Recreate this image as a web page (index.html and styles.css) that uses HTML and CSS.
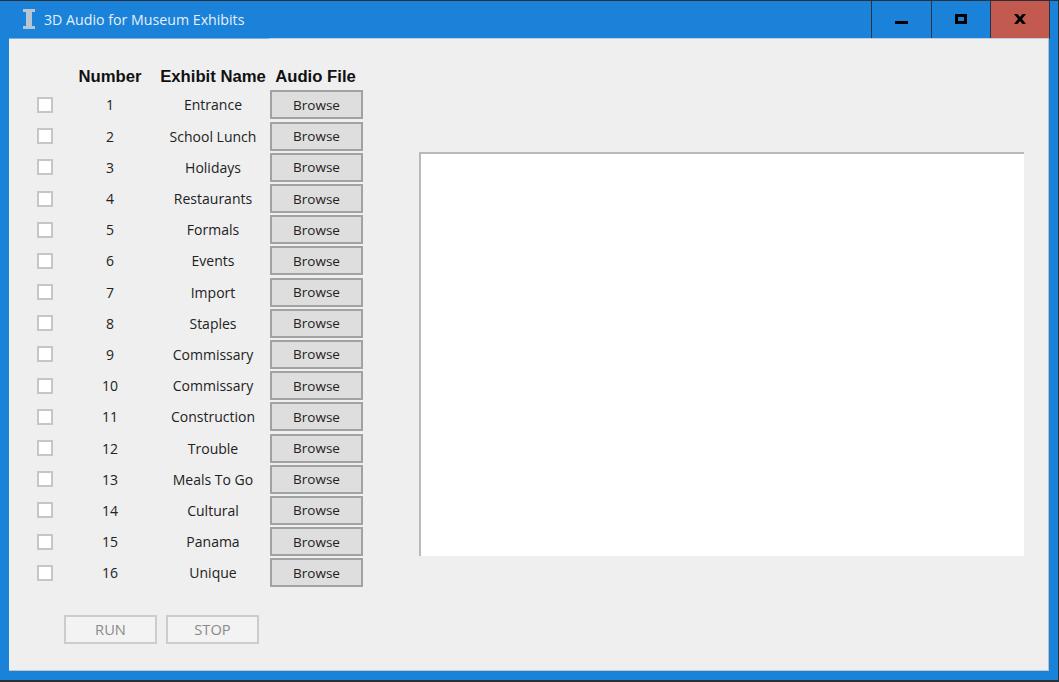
FILE: index.html

```html
<!DOCTYPE html>
<html>
<head>
  <meta charset="UTF-8">
  <title>3D Audio for Museum Exhibits</title>
  <link rel="stylesheet" href="styles.css">
</head>
<body>

<div class="window">
  <div class="titlebar">
    <svg class="app-icon" width="14" height="20" viewBox="0 0 14 20">
      <path d="M1 0h12v3H10v14h3v3H1v-3h3V3H1z" fill="#b5c5d2"/>
    </svg>
    <span class="title">3D Audio for Museum Exhibits</span>
    <div class="caption-btns">
      <div class="caption-btn min">
        <svg width="13" height="3" viewBox="0 0 13 3"><rect width="13" height="3" fill="#000"/></svg>
      </div>
      <div class="caption-btn max">
        <svg width="12" height="10" viewBox="0 0 12 10"><path d="M0 0h12v10H0zM3 3v4h6V3z" fill="#000" fill-rule="evenodd"/></svg>
      </div>
      <div class="caption-btn close">
        <svg width="12" height="10" viewBox="0 0 12 10"><path d="M0 0h3.500L6 3l2.500-3H12L8 5l4 5H8.500L6 7l-2.500 3H0l4-5z" fill="#000"/></svg>
      </div>
    </div>
  </div>
  <div class="client-edge"></div>

  <div class="client">
    <div class="left">
      <div class="row head">
        <span></span>
        <span>Number</span>
        <span>Exhibit Name</span>
        <span class="audio-head">Audio File</span>
      </div>
      <div class="row"><span class="check"></span><span>1</span><span>Entrance</span><button class="browse">Browse</button></div>
      <div class="row"><span class="check"></span><span>2</span><span>School Lunch</span><button class="browse">Browse</button></div>
      <div class="row"><span class="check"></span><span>3</span><span>Holidays</span><button class="browse">Browse</button></div>
      <div class="row"><span class="check"></span><span>4</span><span>Restaurants</span><button class="browse">Browse</button></div>
      <div class="row"><span class="check"></span><span>5</span><span>Formals</span><button class="browse">Browse</button></div>
      <div class="row"><span class="check"></span><span>6</span><span>Events</span><button class="browse">Browse</button></div>
      <div class="row"><span class="check"></span><span>7</span><span>Import</span><button class="browse">Browse</button></div>
      <div class="row"><span class="check"></span><span>8</span><span>Staples</span><button class="browse">Browse</button></div>
      <div class="row"><span class="check"></span><span>9</span><span>Commissary</span><button class="browse">Browse</button></div>
      <div class="row"><span class="check"></span><span>10</span><span>Commissary</span><button class="browse">Browse</button></div>
      <div class="row"><span class="check"></span><span>11</span><span>Construction</span><button class="browse">Browse</button></div>
      <div class="row"><span class="check"></span><span>12</span><span>Trouble</span><button class="browse">Browse</button></div>
      <div class="row"><span class="check"></span><span>13</span><span>Meals To Go</span><button class="browse">Browse</button></div>
      <div class="row"><span class="check"></span><span>14</span><span>Cultural</span><button class="browse">Browse</button></div>
      <div class="row"><span class="check"></span><span>15</span><span>Panama</span><button class="browse">Browse</button></div>
      <div class="row"><span class="check"></span><span>16</span><span>Unique</span><button class="browse">Browse</button></div>
      <div class="actions">
        <button class="action">RUN</button>
        <button class="action">STOP</button>
      </div>
    </div>
    <div class="output"></div>
  </div>
</div>

</body>
</html>
```

FILE: styles.css

```css
html, body {
  margin: 0;
  padding: 0;
  height: 100%;
  overflow: hidden;
  background-color: #2b2f36;
}
.window {
  box-sizing: border-box;
  display: flex;
  flex-direction: column;
  width: 1058px;
  height: 679px;
  margin-top: 1px;
  background-color: #1a82d9;
  font-family: "Open Sans", "Noto Sans", sans-serif;
  font-size: 14px;
  color: #222;
}
.titlebar {
  display: flex;
  align-items: center;
  flex: none;
  height: 37px;
  padding-left: 22px;
}
.app-icon {
  flex: none;
  margin-top: -1px;
}
.title {
  margin-left: 8px;
  color: #e6f0fa;
  font-size: 14.2px;
}
.caption-btns {
  display: flex;
  align-self: flex-start;
  margin-left: auto;
  margin-right: 8px;
  height: 38px;
}
.caption-btn {
  box-sizing: border-box;
  display: flex;
  align-items: center;
  justify-content: center;
  width: 60px;
  height: 38px;
  border-left: 1px solid #2a3440;
  border-bottom: 1px solid #2a3440;
}
.caption-btn svg {
  margin-top: -2px;
}
.caption-btn.min svg {
  margin-top: 6px;
}
.caption-btn.max {
  width: 59px;
}
.caption-btn.close {
  background-color: #c25a50;
  border-right: 1px solid #2a3440;
}
.client-edge {
  flex: none;
  height: 1px;
  margin: 0 9px;
  background: linear-gradient(to right, #7fb0da 260px, #c3ced8 260px);
}
.client {
  display: flex;
  flex: 1;
  margin: 0 9px 9px 9px;
  background-color: #efefef;
  border-bottom: 1px solid #c4c4c4;
  border-right: 1px solid #b8c0c8;
}
.left {
  flex: none;
  width: 354px;
  padding: 22px 0 0 28px;
}
.row {
  display: grid;
  grid-template-columns: 23px 100px 106px 93px;
  align-items: center;
  justify-items: center;
  height: 31.2px;
}
.row .browse {
  margin-left: 8px;
}
.row .check {
  justify-self: start;
  box-sizing: border-box;
  width: 16px;
  height: 16px;
  background-color: #fff;
  border: 2px solid #c6c6c6;
}
.row.head {
  height: 28.4px;
  padding-top: 4px;
  box-sizing: border-box;
  font-family: "Liberation Sans", Arial, sans-serif;
  font-weight: bold;
  font-size: 16.7px;
  color: #111;
}
.row.head span {
  white-space: nowrap;
}
.audio-head {
  margin-left: 6px;
}
.browse {
  box-sizing: border-box;
  width: 93px;
  height: 29px;
  padding: 0;
  background-color: #dedede;
  border: 2px solid #a2a2a2;
  font-family: "Open Sans", "Noto Sans", sans-serif;
  font-size: 13.5px;
  color: #222;
}
.actions {
  display: flex;
  gap: 9px;
  margin: 26.6px 0 0 27px;
}
.action {
  box-sizing: border-box;
  width: 93px;
  height: 29px;
  padding: 0;
  background-color: #f3f3f3;
  border: 2px solid #cccccc;
  font-family: "Open Sans", "Noto Sans", sans-serif;
  font-size: 14.7px;
  color: #8a8a8a;
}
.output {
  flex: none;
  box-sizing: border-box;
  width: 605px;
  height: 404px;
  margin: 113px 0 0 28px;
  background-color: #fff;
  border-top: 2px solid #b9b9b9;
  border-left: 2px solid #b9b9b9;
}
```
